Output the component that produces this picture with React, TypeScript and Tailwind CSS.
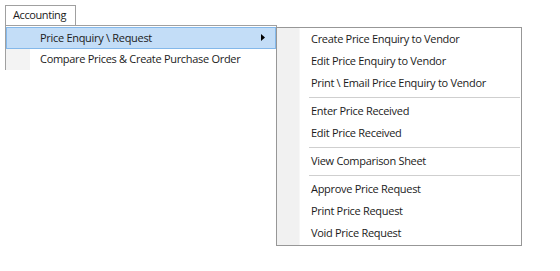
import React from 'react';

type Entry = { label: string } | { sep: true };

const subItems: Entry[] = [
  { label: 'Create Price Enquiry to Vendor' },
  { label: 'Edit Price Enquiry to Vendor' },
  { label: 'Print \\ Email Price Enquiry to Vendor' },
  { sep: true },
  { label: 'Enter Price Received' },
  { label: 'Edit Price Received' },
  { sep: true },
  { label: 'View Comparison Sheet' },
  { sep: true },
  { label: 'Approve Price Request' },
  { label: 'Print Price Request' },
  { label: 'Void Price Request' },
];

const font = { fontFamily: '"Open Sans", "Noto Sans", sans-serif' };

const Arrow = () => (
  <svg width="4" height="7" viewBox="0 0 4 7" className="block">
    <path d="M0 0 L4 3.5 L0 7 Z" fill="#000" />
  </svg>
);

const SubMenu = () => (
  <div className="absolute left-[276px] top-[27px] w-[246px] h-[219px] border border-[#979797] bg-white flex">
    <div className="w-[23px] bg-[#f1f1f1] border-r border-[#f7f7f7]" />
    <div className="flex-1 flex flex-col">
      {subItems.map((it, i) =>
        'sep' in it ? (
          <div key={i} className="h-[6px] flex items-center pl-[9px] pr-[1px]">
            <div className="h-px w-full bg-[#cfcfcf]" />
          </div>
        ) : (
          <div key={i} className="h-[22px] flex items-center pl-[11px] text-[11px] text-[#1b1b1b] tracking-[-0.3px]">
            {it.label}
          </div>
        )
      )}
    </div>
  </div>
);

export default function App() {
  return (
    <div className="w-[560px] h-[271px] bg-white relative overflow-hidden" style={font}>
      <div className="pt-[5px] pl-[5px]">
        <div className="w-[71px] h-[20px] border border-b-0 border-[#a0a0a0] bg-white flex items-center pl-[7px] text-[11px] text-[#1b1b1b] tracking-[-0.4px]">
          Accounting
        </div>
        <div className="w-[272px] h-[45px] border border-b-0 border-[#a0a0a0] bg-white flex">
          <div className="flex-1 flex flex-col pt-px">
            <div className="h-[22px] border border-[#84b8ea] bg-[#c3ddf7] flex items-center text-[11px] text-[#1b1b1b] tracking-[-0.3px]">
              <div className="w-[23px] self-stretch" />
              <span className="pl-[10px] flex-1">Price Enquiry \ Request</span>
              <span className="pr-[10px]"><Arrow /></span>
            </div>
            <div className="h-[22px] flex items-center text-[11px] text-[#1b1b1b] tracking-[-0.3px]">
              <div className="w-[24px] self-stretch bg-[#f3f3f3]" />
              <span className="pl-[10px]">Compare Prices &amp; Create Purchase Order</span>
            </div>
          </div>
        </div>
      </div>
      <SubMenu />
    </div>
  );
}
